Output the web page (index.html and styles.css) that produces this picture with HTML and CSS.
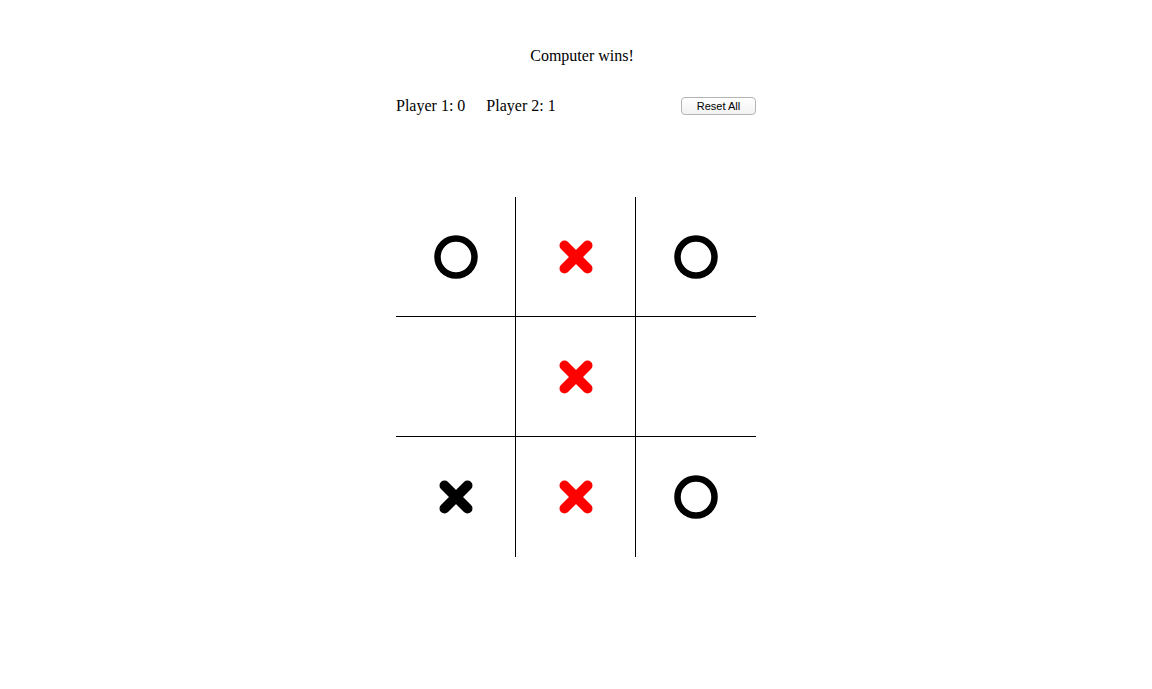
FILE: index.html
```html
<!DOCTYPE html>
<html>
<head>
<meta charset="utf-8">
<title>Tic Tac Toe</title>
<link rel="stylesheet" href="styles.css">
</head>
<body>
<div class="game">
  <div class="status">Computer wins!</div>
  <div class="scores">
    <div class="players">
      <span class="score">Player 1: 0</span>
      <span class="score">Player 2: 1</span>
    </div>
    <button class="reset">Reset All</button>
  </div>
  <div class="board">
    <div class="cell c-r c-b"><svg class="o" viewBox="0 0 44 44"><circle cx="22" cy="22" r="18.5" /></svg></div>
    <div class="cell c-r c-b"><svg class="x red" viewBox="0 0 36 36"><path d="M6.5 6.5 L29.5 29.5 M29.5 6.5 L6.5 29.5" /></svg></div>
    <div class="cell c-b"><svg class="o" viewBox="0 0 44 44"><circle cx="22" cy="22" r="18.5" /></svg></div>
    <div class="cell c-r c-b"></div>
    <div class="cell c-r c-b"><svg class="x red" viewBox="0 0 36 36"><path d="M6.5 6.5 L29.5 29.5 M29.5 6.5 L6.5 29.5" /></svg></div>
    <div class="cell c-b"></div>
    <div class="cell c-r"><svg class="x black" viewBox="0 0 36 36"><path d="M6.5 6.5 L29.5 29.5 M29.5 6.5 L6.5 29.5" /></svg></div>
    <div class="cell c-r"><svg class="x red" viewBox="0 0 36 36"><path d="M6.5 6.5 L29.5 29.5 M29.5 6.5 L6.5 29.5" /></svg></div>
    <div class="cell"><svg class="o" viewBox="0 0 44 44"><circle cx="22" cy="22" r="18.5" /></svg></div>
  </div>
</div>
</body>
</html>
```

FILE: styles.css
```css
html, body {
  margin: 0;
  padding: 0;
  background: #fff;
}
body {
  font-family: "Liberation Serif", "Times New Roman", serif;
  font-size: 16px;
  color: #000;
}
.game {
  width: 360px;
  margin: 0 auto;
  padding-top: 47px;
}
.status {
  text-align: center;
  padding-left: 12px;
  line-height: 18px;
}
.scores {
  display: flex;
  justify-content: space-between;
  align-items: center;
  margin-top: 32px;
}
.players {
  display: flex;
  gap: 21px;
}
.score {
  line-height: 18px;
}
.reset {
  width: 75px;
  height: 18px;
  padding: 0;
  font-family: "Liberation Sans", Arial, sans-serif;
  font-size: 11px;
  color: #000;
  background: linear-gradient(#ffffff, #f2f2f2);
  border: 1px solid #b4b4b4;
  border-radius: 4px;
}
.board {
  margin-top: 82px;
  display: grid;
  grid-template-columns: repeat(3, 120px);
  grid-template-rows: repeat(3, 120px);
}
.cell {
  box-sizing: border-box;
  display: flex;
  align-items: center;
  justify-content: center;
}
.c-r { border-right: 1px solid #000; }
.c-b { border-bottom: 1px solid #000; }
.o {
  width: 44px;
  height: 44px;
}
.o circle {
  fill: none;
  stroke: #000;
  stroke-width: 6.5;
}
.x {
  width: 36px;
  height: 36px;
}
.x path {
  fill: none;
  stroke-width: 10;
  stroke-linecap: round;
}
.x.red path { stroke: #ff0000; }
.x.black path { stroke: #000; }
```
